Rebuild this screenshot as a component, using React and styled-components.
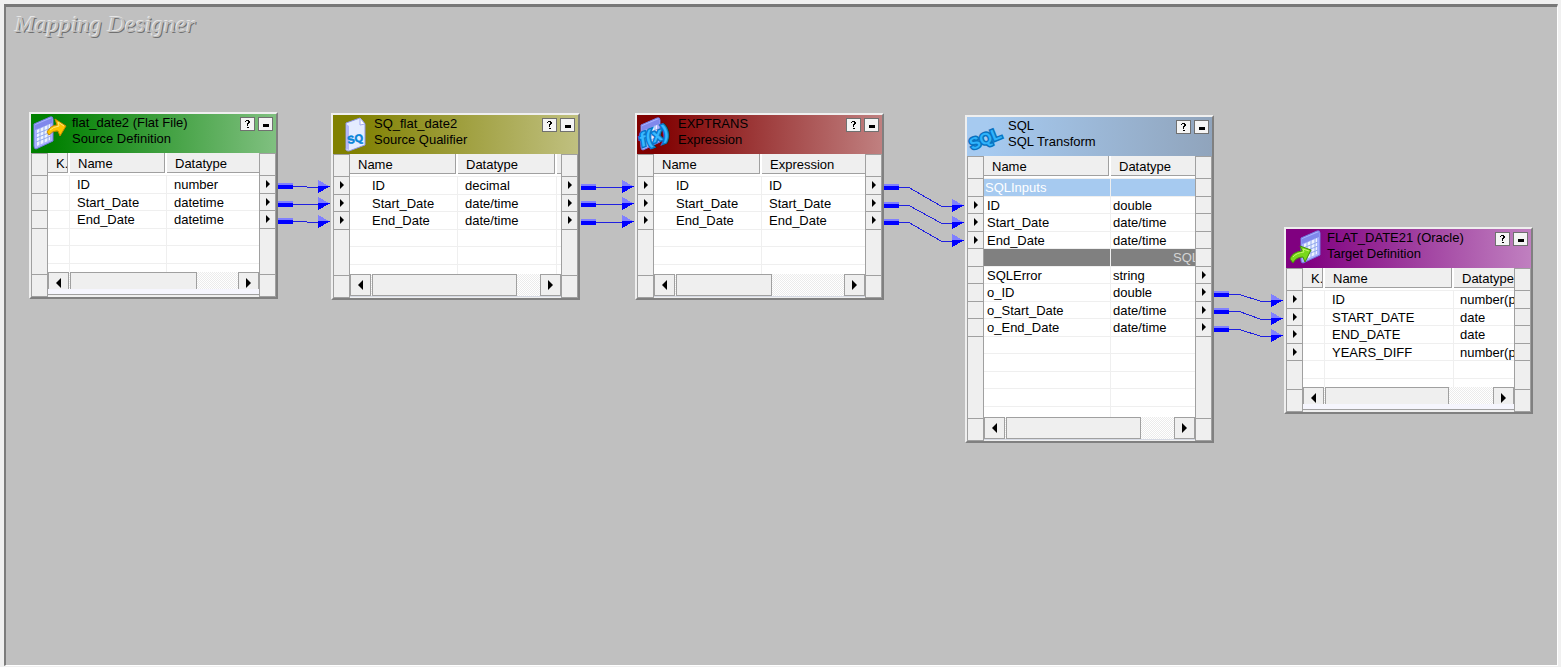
import React from "react";
import styled, { createGlobalStyle } from "styled-components";

const GlobalStyle = createGlobalStyle`
  * { box-sizing: border-box; }
  body {
    margin: 0;
    background: #f0f0f0;
    color: #000;
    font-family: "Liberation Sans", Arial, sans-serif;
    font-size: 13px;
  }
  h1, h2, p, ul { margin: 0; padding: 0; }
`;

const Page = styled.main`
  display: flex;
  flex-direction: column;
  min-height: 100vh;
  padding: 4px 3px 1px 4px;
`;

const Canvas = styled.section`
  position: relative;
  flex: 1;
  overflow: hidden;
  padding: 4px 9px;
  background: #c0c0c0;
  border: 2px solid #fff;
  border-width: 3px 1px 1px 2px;
  border-top-color: #787878;
  border-left-color: #7c7c7c;
`;

const CanvasTitle = styled.h1`
  color: #c0c0c0;
  font: italic 24px/26px "Liberation Serif", "Times New Roman", serif;
  text-shadow: -1px -1px 0 #e6e6e6, 1px 1px 0 #707070;
`;

const Links = styled.svg`
  position: absolute;
  inset: 0;
  width: 100%;
  height: 100%;
`;

const Node = styled.article`
  position: absolute;
  left: ${(p) => p.$x}px;
  top: ${(p) => p.$y}px;
  width: 249px;
  height: ${(p) => p.$h}px;
  display: flex;
  flex-direction: column;
  background: #efefef;
  border: 2px solid;
  border-color: #efefef #808080 #808080 #efefef;
`;

const Header = styled.header`
  display: flex;
  gap: 3px;
  height: 39px;
  padding: 1px 3px 0 2px;
  background: linear-gradient(to right, ${(p) => p.$from} 8%, ${(p) => p.$to});
`;

const Titles = styled.div`
  flex: 1;
  padding-left: 2px;
  white-space: nowrap;
  line-height: 16px;
`;

const NodeName = styled.h2`
  font-size: 13px;
  font-weight: normal;
  line-height: 16px;
`;

const Icon = styled.svg`
  flex: none;
  width: 34px;
  height: 36px;
  overflow: visible;
`;

const HeaderButton = styled.button`
  display: flex;
  width: 15px;
  height: 14px;
  margin-top: 2px;
  padding: 0;
  background: #f4f4f4;
  border: 1px solid #707070;
  svg { display: block; width: 13px; height: 12px; }
`;

const Body = styled.div`
  display: flex;
  flex: 1;
  min-height: 0;
`;

const Gutter = styled.div`
  display: flex;
  flex-direction: column;
  width: 17px;
  border: solid #a0a0a0;
  border-width: 1px 1px 0;
`;

const GutterCell = styled.div`
  height: 22px;
  border-bottom: 1px solid #a0a0a0;
  ${(p) => p.$fill && "flex: 1;"}
`;

const Ports = styled.ul`
  list-style: none;
`;

const Port = styled.li`
  height: 18px;
  border-bottom: 1px solid #a0a0a0;
  &:nth-child(even) { height: 17px; }
  svg { display: block; width: 15px; height: 16px; }
`;

const Center = styled.div`
  display: flex;
  flex: 1;
  flex-direction: column;
  min-width: 0;
`;

const Grid = styled.div`
  flex: 1;
  min-height: 0;
  overflow: hidden;
  background: #fff;
`;

const Table = styled.table`
  width: 100%;
  table-layout: fixed;
  border-spacing: 0;
`;

const Th = styled.th`
  width: ${(p) => (p.$w ? `${p.$w}px` : "auto")};
  padding: 0 0 2px;
  border-bottom: 1px solid #efefef;
  font-weight: normal;
  text-align: left;
`;

const ThLabel = styled.span`
  display: block;
  height: 20px;
  margin-right: ${(p) => (p.$last ? 0 : 2)}px;
  padding: 2px 0 0 8px;
  overflow: hidden;
  white-space: nowrap;
  line-height: 18px;
  background: #efefef;
  border-bottom: 1px solid #a0a0a0;
  border-right: ${(p) => (p.$last ? 0 : 1)}px solid #a0a0a0;
`;

const tones = {
  plain: { bg: "#fff", fg: "#000" },
  input: { bg: "#a6caf0", fg: "#fff" },
  output: { bg: "#808080", fg: "#d4d4d4" },
};

const Tr = styled.tr`
  color: ${(p) => tones[p.$tone].fg};
  background: ${(p) => tones[p.$tone].bg};
  td { height: 18px; line-height: 16px; }
  &:nth-child(even) td { height: 17px; line-height: 15px; }
`;

const Td = styled.td`
  padding: 1px 0 0 ${(p) => p.$pad}px;
  overflow: hidden;
  white-space: nowrap;
  border: solid #efefef;
  border-width: 0 1px 1px 0;
  &:last-child { border-right: 0; }
`;

const Scroll = styled.div`
  position: relative;
  display: flex;
  height: ${(p) => (p.$cut ? 17 : 22)}px;
  margin-bottom: ${(p) => (p.$cut ? 8 : 2)}px;
  background: repeating-conic-gradient(#fff 0 25%, #ebebeb 0 50%) 0 0 / 2px 2px;
  box-shadow: ${(p) => (p.$cut ? "0 5px 0 #f5f5fd, 0 6px 0 #a0a0a0" : "0 1px 0 #d6dae4")};
  > * {
    border: 1px solid #a0a0a0;
    border-bottom-width: ${(p) => (p.$cut ? 0 : 1)}px;
  }
`;

const ScrollButton = styled.button`
  display: flex;
  align-items: center;
  justify-content: center;
  width: 21px;
  padding: ${(p) => (p.$cut ? 4 : 0)}px 0 0;
  background: #efefef;
  svg { display: block; width: 5px; height: 10px; }
`;

const Thumb = styled.div`
  width: ${(p) => p.$w}px;
  margin: 0 auto 0 1px;
  background: #efefef;
`;

/* ---------- icons ---------- */

const Sheet = ({ x = 0, y = 0 }) => (
  <g transform={`translate(${x} ${y})`}>
    <path d="M1 8 L17 1 Q20 0 20 3 L20 25 L3 33 Q1 33 1 30 Z" fill="#a9b2ff" stroke="#7078e0" />
    <path d="M4 14 L17 8 V24 L4 30 Z" fill="#edf3ff" />
    <path d="M2 9 L19 2 V7 L2 14 Z" fill="#8088ec" />
    <path d="M7 12V29M11 10V27M15 8V25M3 18L18 12M3 22L18 16M3 26L18 20" stroke="#92a8ee" fill="none" />
  </g>
);

const icons = {
  source: (
    <Icon viewBox="0 0 34 36" aria-hidden="true">
      <Sheet x={0} y={1} />
      <path d="M14 17 Q18 10 24 10 L22 4 L33 11 L27 21 L25 16 Q20 15 16 20 Z" fill="#ffc400" stroke="#c58a00" />
      <path d="M17 15 Q20 12 26 11 L25 7 L31 11" stroke="#ffe77a" fill="none" />
    </Icon>
  ),
  qualifier: (
    <Icon viewBox="0 0 34 36" aria-hidden="true">
      <path d="M11 7 L25 2 L30 8 V29 L14 35 Q10 35 11 32 Z" fill="#e4ecff" stroke="#9097e8" />
      <path d="M11 8 L14 10 V34 L11 33 Z" fill="#b2b7fa" />
      <path d="M25 2 L25 9 L30 8 Z" fill="#fff" stroke="#a4abf0" />
      <text x="13" y="28" transform="rotate(-10 13 28)" fill="#0784d8" stroke="#0784d8" strokeWidth="0.500" fontSize="11" fontWeight="bold">SQ</text>
    </Icon>
  ),
  expression: (
    <Icon viewBox="0 0 34 36" aria-hidden="true">
      <Sheet x={1} y={1} />
      <text x="3" y="31" transform="rotate(-20 3 31)" fill="#39b8ff" stroke="#0875c8" strokeWidth="3" paintOrder="stroke" fontSize="19" fontWeight="bold" fontStyle="italic">f(x)</text>
    </Icon>
  ),
  sql: (
    <Icon viewBox="0 0 34 36" aria-hidden="true">
      <text x="3" y="32" transform="rotate(-22 3 32)" fill="#2fb2fa" stroke="#0873c0" strokeWidth="3" paintOrder="stroke" fontSize="16" fontWeight="bold">SQL</text>
    </Icon>
  ),
  target: (
    <Icon viewBox="0 0 34 36" aria-hidden="true">
      <Sheet x={12} y={0} />
      <path d="M2 29 Q4 22 14 21 L12 16 L23 20 L17 32 L15 27 Q8 27 5 33 Z" fill="#79d81c" stroke="#438c09" />
      <path d="M5 27 Q8 23 16 22 L15 19 L21 21" stroke="#c4f46a" fill="none" />
    </Icon>
  ),
};

const PortArrow = () => (
  <svg viewBox="0 0 15 16" aria-hidden="true">
    <path d="M6 4V12L10 8Z" />
  </svg>
);

/* ---------- data ---------- */

const dateRows = (type) => [["ID", type[0]], ["Start_Date", type[1]], ["End_Date", type[1]]];

const nodes = [
  {
    x: 29, y: 112, h: 187, icon: "source", from: "#008000", to: "#80c080",
    name: "flat_date2 (Flat File)", kind: "Source Definition",
    cols: [["K.", 22], ["Name", 97], ["Datatype"]], pads: [0, 7, 7],
    rows: dateRows(["number", "datetime"]).map((r) => ["", ...r]),
    left: [0, 0, 0], right: [1, 1, 1], lines: 7, thumb: 127, cut: true,
  },
  {
    x: 331, y: 113, h: 187, icon: "qualifier", from: "#808000", to: "#c0c080",
    name: "SQ_flat_date2", kind: "Source Qualifier",
    cols: [["Name", 108], ["Datatype", 99], [""]], pads: [22, 7, 0],
    rows: dateRows(["decimal", "date/time"]).map((r) => [...r, ""]),
    left: [1, 1, 1], right: [1, 1, 1], lines: 7, thumb: 145,
  },
  {
    x: 635, y: 113, h: 187, icon: "expression", from: "#800000", to: "#c08080",
    name: "EXPTRANS", kind: "Expression",
    cols: [["Name", 108], ["Expression"]], pads: [22, 7],
    rows: [["ID", "ID"], ["Start_Date", "Start_Date"], ["End_Date", "End_Date"]],
    left: [1, 1, 1], right: [1, 1, 1], lines: 7, thumb: 96,
  },
  {
    x: 965, y: 115, h: 328, icon: "sql", from: "#a6caf0", to: "#90a4bc",
    name: "SQL", kind: "SQL Transform",
    cols: [["Name", 127], ["Datatype"]], pads: [3, 2],
    rows: [
      ["SQLInputs", ""], ...dateRows(["double", "date/time"]), ["", "SQL"],
      ["SQLError", "string"], ["o_ID", "double"], ["o_Start_Date", "date/time"], ["o_End_Date", "date/time"],
    ],
    tones: { 0: "input", 4: "output" },
    left: [0, 1, 1, 1, 0, 0, 0, 0, 0], right: [0, 0, 0, 0, 0, 1, 1, 1, 1], lines: 14, thumb: 135,
  },
  {
    x: 1284, y: 227, h: 187, icon: "target", from: "#800080", to: "#c080c0",
    name: "FLAT_DATE21 (Oracle)", kind: "Target Definition",
    cols: [["K.", 22], ["Name", 129], ["Datatype"]], pads: [0, 7, 6],
    rows: [["", "ID", "number(p,s)"], ["", "START_DATE", "date"], ["", "END_DATE", "date"], ["", "YEARS_DIFF", "number(p,s)"]],
    left: [1, 1, 1, 1], right: [0, 0, 0, 0], lines: 7, thumb: 124, cut: true,
  },
];

const links = [
  [278, 186, 331, 187], [278, 204, 331, 204], [278, 221, 331, 222],
  [581, 187, 635, 187], [581, 204, 635, 204], [581, 222, 635, 222],
  [884, 187, 965, 206], [884, 205, 965, 223], [884, 222, 965, 241],
  [1214, 294, 1284, 301], [1214, 311, 1284, 319], [1214, 329, 1284, 336],
];

/* Link coordinates are page coordinates; the canvas content starts below its frame. */
const ORIGIN = { x: 6, y: 7 };

function Link({ from: [x1, y1], to: [x2, y2] }) {
  return (
    <g shapeRendering="crispEdges">
      <path d={`M${x1} ${y1}H${x1 + 24}L${x2 - 24} ${y2}H${x2 - 10}`} fill="none" stroke="#2020e0" />
      <rect x={x1} y={y1 - 3} width="15" height="2" fill="#8080ff" />
      <rect x={x1} y={y1 - 1} width="15" height="4" fill="#00f" />
      <path d={`M${x2 - 13} ${y2 - 7}L${x2} ${y2}H${x2 - 13}Z`} fill="#8080ff" />
      <path d={`M${x2 - 13} ${y2 - 1}H${x2}L${x2 - 13} ${y2 + 6}Z`} fill="#00f" />
    </g>
  );
}

function PortColumn({ ports }) {
  return (
    <Gutter>
      <GutterCell />
      <Ports>
        {ports.map((on, i) => <Port key={i}>{on ? <PortArrow /> : null}</Port>)}
      </Ports>
      <GutterCell $fill />
      <GutterCell />
    </Gutter>
  );
}

function MappingNode({ node }) {
  const lines = Array.from({ length: node.lines }, (_, i) => node.rows[i] || node.cols.map(() => ""));
  return (
    <Node $x={node.x - ORIGIN.x} $y={node.y - ORIGIN.y} $h={node.h}>
      <Header $from={node.from} $to={node.to}>
        {icons[node.icon]}
        <Titles>
          <NodeName>{node.name}</NodeName>
          <p>{node.kind}</p>
        </Titles>
        <HeaderButton type="button" aria-label="Help">
          <svg viewBox="0 0 13 12"><path d="M4 4V3H5V2H8V3H9V5H8V6H7V8H6V5H7V3H5V4ZM6 9H8V10H6Z" /></svg>
        </HeaderButton>
        <HeaderButton type="button" aria-label="Minimize">
          <svg viewBox="0 0 13 12"><path d="M4 6H10V9H4Z" /></svg>
        </HeaderButton>
      </Header>
      <Body>
        <PortColumn ports={node.left} />
        <Center>
          <Grid>
            <Table aria-label={`${node.name} ports`}>
              <thead>
                <tr>
                  {node.cols.map(([label, w], i) => (
                    <Th key={i} $w={w}>
                      <ThLabel $last={i === node.cols.length - 1}>{label}</ThLabel>
                    </Th>
                  ))}
                </tr>
              </thead>
              <tbody>
                {lines.map((cells, r) => {
                  const tone = (node.tones && node.tones[r]) || "plain";
                  return (
                    <Tr key={r} $tone={tone}>
                      {cells.map((cell, c) => (
                        <Td key={c} $pad={tone === "output" ? 62 : tone === "input" ? 1 : node.pads[c]}>{cell}</Td>
                      ))}
                    </Tr>
                  );
                })}
              </tbody>
            </Table>
          </Grid>
          <Scroll $cut={node.cut}>
            <ScrollButton type="button" aria-label="Scroll left" $cut={node.cut}>
              <svg viewBox="0 0 5 10"><path d="M5 0V10L0 5Z" /></svg>
            </ScrollButton>
            <Thumb $w={node.thumb} />
            <ScrollButton type="button" aria-label="Scroll right" $cut={node.cut}>
              <svg viewBox="0 0 5 10"><path d="M0 0V10L5 5Z" /></svg>
            </ScrollButton>
          </Scroll>
        </Center>
        <PortColumn ports={node.right} />
      </Body>
    </Node>
  );
}

export default function App() {
  return (
    <>
      <GlobalStyle />
      <Page>
        <Canvas>
          <CanvasTitle>Mapping Designer</CanvasTitle>
          {nodes.map((node) => <MappingNode key={node.name} node={node} />)}
          <Links aria-hidden="true" pointerEvents="none">
            <g transform={`translate(${-ORIGIN.x} ${-ORIGIN.y})`}>
              {links.map(([x1, y1, x2, y2]) => (
                <Link key={`${x1}-${y1}`} from={[x1, y1]} to={[x2, y2]} />
              ))}
            </g>
          </Links>
        </Canvas>
      </Page>
    </>
  );
}
